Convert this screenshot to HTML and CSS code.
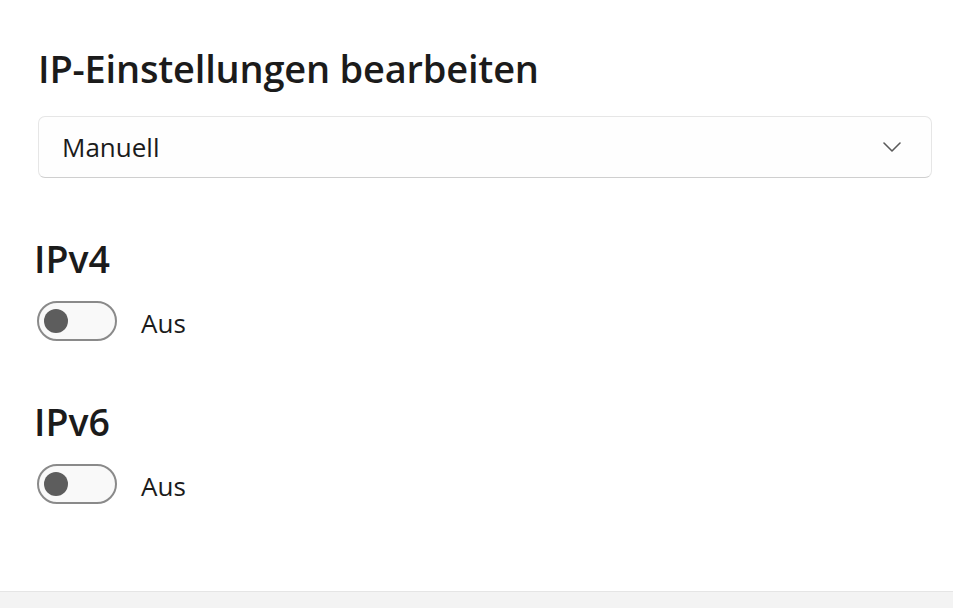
FILE: index.html
```html
<!DOCTYPE html>
<html lang="de">
<head>
<meta charset="utf-8">
<link rel="stylesheet" href="styles.css">
</head>
<body>
<div class="page">
  <main class="content">
    <h1 class="title">IP-Einstellungen bearbeiten</h1>
    <div class="select">
      <span class="select-value">Manuell</span>
      <svg class="chevron" width="18" height="10" viewBox="0 0 18 10"><path d="M1 1 L9 9 L17 1" fill="none" stroke="#5a5a5a" stroke-width="1.6" stroke-linecap="round" stroke-linejoin="round"/></svg>
    </div>
    <section class="group group-first">
      <h2 class="group-title">IPv4</h2>
      <div class="toggle-row">
        <span class="toggle"><span class="knob"></span></span>
        <span class="toggle-label">Aus</span>
      </div>
    </section>
    <section class="group">
      <h2 class="group-title">IPv6</h2>
      <div class="toggle-row">
        <span class="toggle"><span class="knob"></span></span>
        <span class="toggle-label">Aus</span>
      </div>
    </section>
  </main>
  <footer class="footer"></footer>
</div>
</body>
</html>
```
FILE: styles.css
```css
* { box-sizing: border-box; }
html, body { margin: 0; padding: 0; }
body {
  background: #ffffff;
  font-family: "Open Sans", "Noto Sans", sans-serif;
  color: #1b1b1b;
  width: 953px;
  height: 608px;
  overflow: hidden;
}
.page {
  display: flex;
  flex-direction: column;
  height: 608px;
}
.content {
  flex: 1;
  padding: 40px 21px 0 34px;
}
.title {
  margin: 0 0 0 4px;
  font-size: 38px;
  font-weight: 600;
  line-height: 56px;
  letter-spacing: -0.2px;
}
.select {
  margin: 20px 0 0 4px;
  height: 62px;
  border: 1px solid #e6e6e6;
  border-bottom-color: #cfcfcf;
  border-radius: 7px;
  display: flex;
  align-items: center;
  justify-content: space-between;
  padding: 0 30px 0 23px;
  background: #fefefe;
}
.select-value {
  font-size: 26px;
  line-height: 30px;
}
.chevron { display: block; }
.group { margin-top: 56px; }
.group-title {
  margin: 0;
  font-size: 37.5px;
  font-weight: 600;
  line-height: 50px;
}
.toggle-row {
  display: flex;
  align-items: center;
  margin: 17px 0 0 3px;
  gap: 24px;
}
.toggle {
  width: 80px;
  height: 40px;
  border: 2px solid #8a8a8a;
  border-radius: 20px;
  background: #f9f9f9;
  display: flex;
  align-items: center;
  padding-left: 5px;
}
.knob {
  width: 24px;
  height: 24px;
  border-radius: 50%;
  background: #5d5d5d;
}
.toggle-label {
  font-size: 26px;
  line-height: 30px;
  padding-top: 4px;
}
.footer {
  height: 17px;
  background: #f3f3f3;
  border-top: 1px solid #e5e5e5;
}
```
